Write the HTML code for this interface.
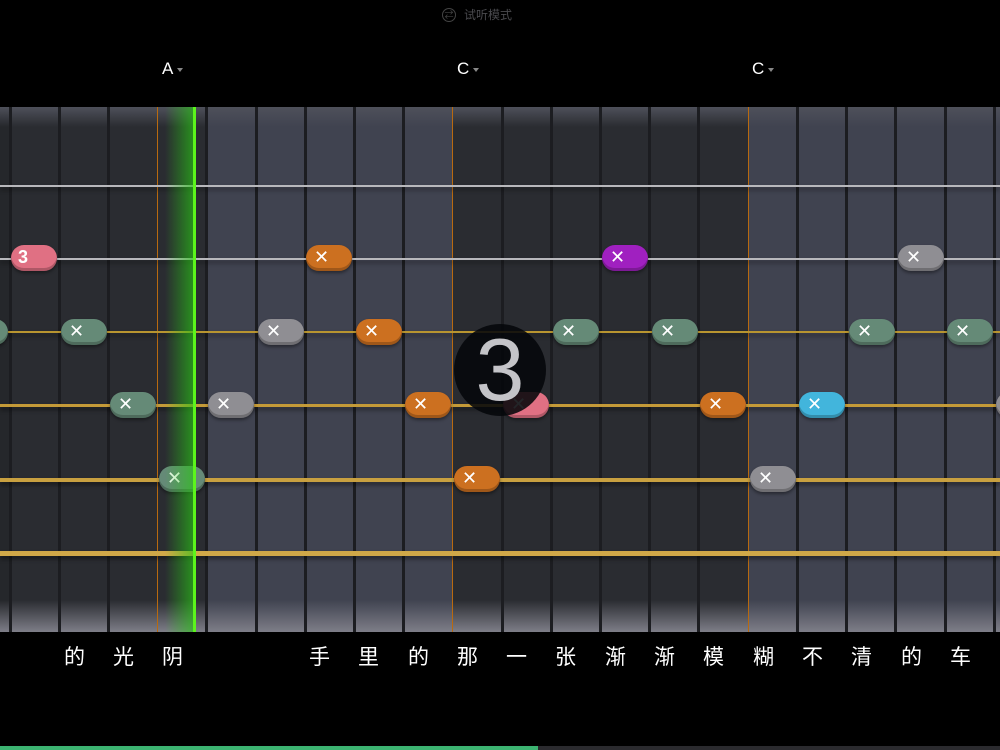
<!DOCTYPE html>
<html><head><meta charset="utf-8"><style>
body{margin:0;width:1000px;height:750px;background:#000;overflow:hidden;position:relative;font-family:"Liberation Sans","Noto Sans CJK SC",sans-serif}
.a{position:absolute}
.col{position:absolute;top:107px;height:525px}
.d{background:#2a2c31}.l{background:#404350}
.dv{position:absolute;top:107px;height:525px;width:3px;background:#1c1d21}
.or{position:absolute;top:107px;height:525px;width:1px;background:#b86a10}
.s{position:absolute;left:0;width:1000px;box-shadow:0 3px 4px rgba(0,0,0,.45)}
.p{position:absolute;width:46px;height:26px;border-radius:13px;color:#fff;font-size:18px;line-height:25px;text-indent:8px;box-shadow:inset 0 -3px 0 rgba(0,0,0,.22),0 2px 3px rgba(0,0,0,.4)}
.g{background:#658a77}.gr{background:#8f8e93}.o{background:#cc7020}.pk{background:#e07083}.pu{background:#a020c0}.b{background:#42b5dc}
.ly{position:absolute;top:641px;color:#fff;font-size:21px}
.ch{position:absolute;top:59px;color:#fff;font-size:17px}
.ch i{display:inline-block;width:0;height:0;border-left:3px solid transparent;border-right:3px solid transparent;border-top:4px solid #888;margin-left:4px;vertical-align:middle}
</style></head><body>
<div class="a" style="left:442px;top:8px;width:12px;height:12px;border:1.5px solid #444;border-radius:50%;color:#444;font-size:9px;line-height:12px;text-align:center">⇄</div>
<div class="a" style="left:464px;top:6px;color:#4a4a4e;font-size:12px">试听模式</div>
<div class="ch" style="left:162px">A<i></i></div>
<div class="ch" style="left:457px">C<i></i></div>
<div class="ch" style="left:752px">C<i></i></div>

<div class="col" style="left:0;width:10px;background:#25272b"></div>
<div class="col d" style="left:10px;width:196px"></div>
<div class="col l" style="left:206px;width:246px"></div>
<div class="col d" style="left:452px;width:296px"></div>
<div class="col l" style="left:748px;width:252px"></div>
<div class="col" style="left:0;width:1000px;top:107px;height:20px;background:linear-gradient(#4e505a,rgba(78,80,90,0))"></div>
<div class="col" style="left:0;width:1000px;top:600px;height:32px;background:linear-gradient(rgba(140,140,150,0),#7e7e88)"></div>

<div class="dv" style="left:9px"></div><div class="dv" style="left:58px"></div><div class="dv" style="left:107px"></div>
<div class="dv" style="left:205px"></div><div class="dv" style="left:255px"></div><div class="dv" style="left:304px"></div><div class="dv" style="left:353px"></div><div class="dv" style="left:402px"></div>
<div class="dv" style="left:501px"></div><div class="dv" style="left:550px"></div><div class="dv" style="left:599px"></div><div class="dv" style="left:648px"></div><div class="dv" style="left:697px"></div>
<div class="dv" style="left:796px"></div><div class="dv" style="left:845px"></div><div class="dv" style="left:894px"></div><div class="dv" style="left:944px"></div><div class="dv" style="left:993px"></div>
<div class="or" style="left:157px"></div><div class="or" style="left:452px"></div><div class="or" style="left:748px"></div>

<div class="s" style="top:185px;height:2px;background:#b8b8bc"></div>
<div class="s" style="top:258px;height:2px;background:#b8b8bc"></div>
<div class="s" style="top:331px;height:2px;background:#b89530"></div>
<div class="s" style="top:404px;height:3px;background:#c49a38"></div>
<div class="s" style="top:478px;height:4px;background:#c8a040"></div>
<div class="s" style="top:551px;height:5px;background:#d0a848"></div>

<div class="p pk" style="left:11px;top:245px;text-indent:7px;font-weight:bold">3</div>
<div class="p o" style="left:306px;top:245px">✕</div>
<div class="p pu" style="left:602px;top:245px">✕</div>
<div class="p gr" style="left:898px;top:245px">✕</div>

<div class="p g" style="left:-38px;top:319px">✕</div>
<div class="p g" style="left:61px;top:319px">✕</div>
<div class="p gr" style="left:258px;top:319px">✕</div>
<div class="p o" style="left:356px;top:319px">✕</div>
<div class="p g" style="left:553px;top:319px">✕</div>
<div class="p g" style="left:652px;top:319px">✕</div>
<div class="p g" style="left:849px;top:319px">✕</div>
<div class="p g" style="left:947px;top:319px">✕</div>

<div class="p g" style="left:110px;top:392px">✕</div>
<div class="p gr" style="left:208px;top:392px">✕</div>
<div class="p o" style="left:405px;top:392px">✕</div>
<div class="p pk" style="left:503px;top:392px">✕</div>
<div class="p o" style="left:700px;top:392px">✕</div>
<div class="p b" style="left:799px;top:392px">✕</div>
<div class="p gr" style="left:996px;top:392px">✕</div>

<div class="p g" style="left:159px;top:466px">✕</div>
<div class="p o" style="left:454px;top:466px">✕</div>
<div class="p gr" style="left:750px;top:466px">✕</div>

<div class="a" style="left:165px;top:107px;width:29px;height:525px;background:linear-gradient(90deg,rgba(40,200,20,0),rgba(40,200,20,.65))"></div>
<div class="a" style="left:193px;top:107px;width:3px;height:525px;background:#5cf51c"></div>

<div class="a" style="left:454px;top:324px;width:92px;height:92px;border-radius:50%;background:rgba(5,7,10,.88);color:#c4c4c8;font-size:88px;line-height:92px;text-align:center">3</div>

<div class="ly" style="left:64px">的</div><div class="ly" style="left:113px">光</div><div class="ly" style="left:162px">阴</div>
<div class="ly" style="left:309px">手</div><div class="ly" style="left:358px">里</div><div class="ly" style="left:408px">的</div><div class="ly" style="left:457px">那</div><div class="ly" style="left:506px">一</div><div class="ly" style="left:555px">张</div><div class="ly" style="left:605px">渐</div><div class="ly" style="left:654px">渐</div><div class="ly" style="left:703px">模</div><div class="ly" style="left:753px">糊</div><div class="ly" style="left:802px">不</div><div class="ly" style="left:851px">清</div><div class="ly" style="left:901px">的</div><div class="ly" style="left:950px">车</div>

<div class="a" style="left:0;top:746px;width:1000px;height:4px;background:#2a2a2e"></div>
<div class="a" style="left:0;top:746px;width:538px;height:4px;background:#3cb371"></div>
</body></html>
